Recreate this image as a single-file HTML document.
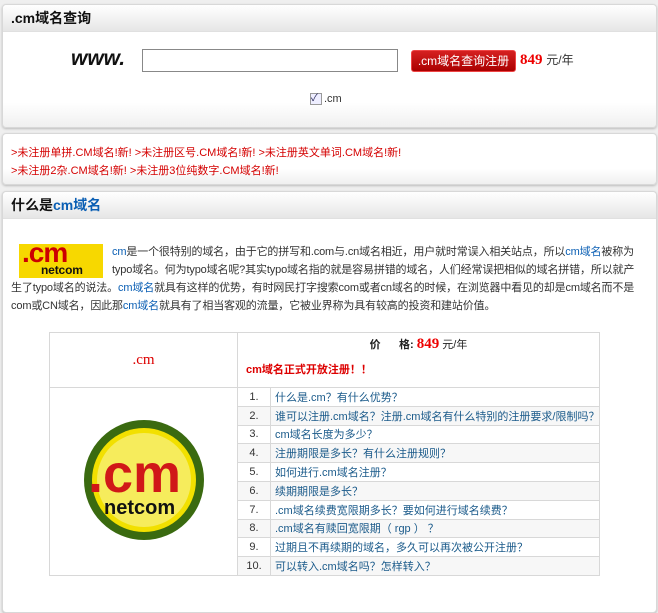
<!DOCTYPE html>
<html><head><meta charset="utf-8"><style>
body{margin:0;background:#efefef;font-family:"Liberation Sans","Noto Sans CJK SC",sans-serif;font-size:12px;color:#333;width:658px;height:606px;overflow:hidden;position:relative}
.p{position:absolute;left:2px;width:653px;background:#fff;border:1px solid #d8d8d8;border-radius:4px;box-shadow:0 1px 2px #bbb}
.h{height:26px;background:linear-gradient(#fff,#e6e6e6);border-bottom:1px solid #e0e0e0;font-size:14px;font-weight:bold;color:#111;line-height:26px;padding-left:8px;border-radius:4px 4px 0 0}
.abs{position:absolute}
a{color:#0b5fb4;text-decoration:none}
.r{color:#d40000}
table{border-collapse:collapse;table-layout:fixed}
td{border:1px solid #d8d8d8;white-space:nowrap;overflow:hidden;padding:0}
</style></head><body>
<div class="p" style="top:4px;height:122px;background:linear-gradient(#fff 80%,#f0f0f0)">
 <div class="h">.cm域名查询</div>
 <div class="abs" style="left:68px;top:42px;font:italic bold 21px 'Liberation Sans',sans-serif;color:#111">www.</div>
 <div class="abs" style="left:139px;top:44px;width:254px;height:21px;border:1px solid #888;background:#fff"></div>
 <div class="abs" style="left:408px;top:45px;width:103px;height:20px;background:linear-gradient(#d52020,#a00);border:1px solid #e44;border-radius:3px;color:#fff;font-size:12px;line-height:20px;text-align:center">.cm域名查询注册</div>
 <div class="abs" style="left:517px;top:46px;font:bold 15px 'Liberation Serif',serif;color:#e00">849 <span style="font:12px 'Liberation Sans','Noto Sans CJK SC',sans-serif;color:#333">元/年</span></div>
 <div class="abs" style="left:307px;top:88px;width:10px;height:10px;border:1px solid #999;background:#eef;font-size:10px;line-height:10px;color:#225">✓</div>
 <div class="abs" style="left:321px;top:88px;font-size:11px">.cm</div>
</div>
<div class="p" style="top:133px;height:50px;background:linear-gradient(#fff 70%,#f0f0f0)">
 <div class="abs r" style="left:8px;top:10px;font-size:11px;line-height:18px">&gt;未注册单拼.CM域名!新! &gt;未注册区号.CM域名!新! &gt;未注册英文单词.CM域名!新!<br>&gt;未注册2杂.CM域名!新! &gt;未注册3位纯数字.CM域名!新!</div>
</div>
<div class="p" style="top:191px;height:420px">
 <div class="h">什么是<span style="color:#0b5fb4">cm域名</span></div>
 <div class="abs" style="left:8px;top:51px;width:634px;font-size:11px;line-height:18px;color:#333;letter-spacing:-0.15px">
  <div style="float:left;position:relative;margin:1px 9px 0 8px;width:84px;height:34px;background:#f7d800;overflow:hidden">
   <div class="abs" style="left:3px;top:-5px;font:bold 28px/28px 'Liberation Sans',sans-serif;color:#c00;letter-spacing:-1px">.cm</div>
   <div class="abs" style="left:22px;top:20px;font:bold 12px/13px 'Liberation Sans',sans-serif;color:#111">netcom</div>
  </div>
  <a>cm</a>是一个很特别的域名，由于它的拼写和.com与.cn域名相近，用户就时常误入相关站点，所以<a>cm域名</a>被称为typo域名。何为typo域名呢?其实typo域名指的就是容易拼错的域名，人们经常误把相似的域名拼错，所以就产生了typo域名的说法。<a>cm域名</a>就具有这样的优势，有时网民打字搜索com或者cn域名的时候，在浏览器中看见的却是cm域名而不是com或CN域名，因此那<a>cm域名</a>就具有了相当客观的流量，它被业界称为具有较高的投资和建站价值。</div>
 <table class="abs" style="left:46px;top:140px;width:551px;font-size:11px">
  <colgroup><col style="width:188px"><col style="width:33px"><col></colgroup>
  <tr style="height:55px"><td style="text-align:center;font:15px 'Liberation Serif',serif;color:#d00">.cm</td>
   <td colspan="2" style="vertical-align:top;padding:2px 8px"><div style="text-align:center;font-weight:bold;color:#222;margin-top:1px">价&nbsp;&nbsp;&nbsp;&nbsp;&nbsp;&nbsp;格: <span style="font:bold 15px 'Liberation Serif',serif;color:#e00">849</span> <span style="font-weight:normal">元/年</span></div><div style="color:#d00;font-weight:bold;margin-top:8px">cm域名正式开放注册！！</div></td></tr>
  <tr style="height:18.8px"><td rowspan="10" style="text-align:center">
   <svg width="124" height="128" viewBox="0 0 124 128"><circle cx="62" cy="64" r="60" fill="#3a6a10"/><circle cx="62" cy="64" r="52" fill="#f2e000"/><circle cx="62" cy="64" r="47" fill="#f6ec5c"/><text x="6" y="76" font-family="Liberation Sans" font-weight="bold" font-size="54" fill="#d01818">.cm</text><text x="22" y="98" font-family="Liberation Sans" font-weight="bold" font-size="20" fill="#111">netcom</text></svg></td>
   <td style="text-align:center">1.</td><td style="padding-left:4px"><a style="color:#1a5a8a">什么是.cm？有什么优势？</a></td></tr>
  <tr style="height:18.8px;background:#f7f7f7"><td style="text-align:center">2.</td><td style="padding-left:4px"><a style="color:#1a5a8a">谁可以注册.cm域名？注册.cm域名有什么特别的注册要求/限制吗？</a></td></tr>
  <tr style="height:18.8px"><td style="text-align:center">3.</td><td style="padding-left:4px"><a style="color:#1a5a8a">cm域名长度为多少？</a></td></tr>
  <tr style="height:18.8px;background:#f7f7f7"><td style="text-align:center">4.</td><td style="padding-left:4px"><a style="color:#1a5a8a">注册期限是多长？有什么注册规则？</a></td></tr>
  <tr style="height:18.8px"><td style="text-align:center">5.</td><td style="padding-left:4px"><a style="color:#1a5a8a">如何进行.cm域名注册？</a></td></tr>
  <tr style="height:18.8px;background:#f7f7f7"><td style="text-align:center">6.</td><td style="padding-left:4px"><a style="color:#1a5a8a">续期期限是多长？</a></td></tr>
  <tr style="height:18.8px"><td style="text-align:center">7.</td><td style="padding-left:4px"><a style="color:#1a5a8a">.cm域名续费宽限期多长？要如何进行域名续费？</a></td></tr>
  <tr style="height:18.8px;background:#f7f7f7"><td style="text-align:center">8.</td><td style="padding-left:4px"><a style="color:#1a5a8a">.cm域名有赎回宽限期（ rgp ） ？</a></td></tr>
  <tr style="height:18.8px"><td style="text-align:center">9.</td><td style="padding-left:4px"><a style="color:#1a5a8a">过期且不再续期的域名，多久可以再次被公开注册？</a></td></tr>
  <tr style="height:18.8px;background:#f7f7f7"><td style="text-align:center">10.</td><td style="padding-left:4px"><a style="color:#1a5a8a">可以转入.cm域名吗？怎样转入？</a></td></tr>
 </table>
</div>
</body></html>
